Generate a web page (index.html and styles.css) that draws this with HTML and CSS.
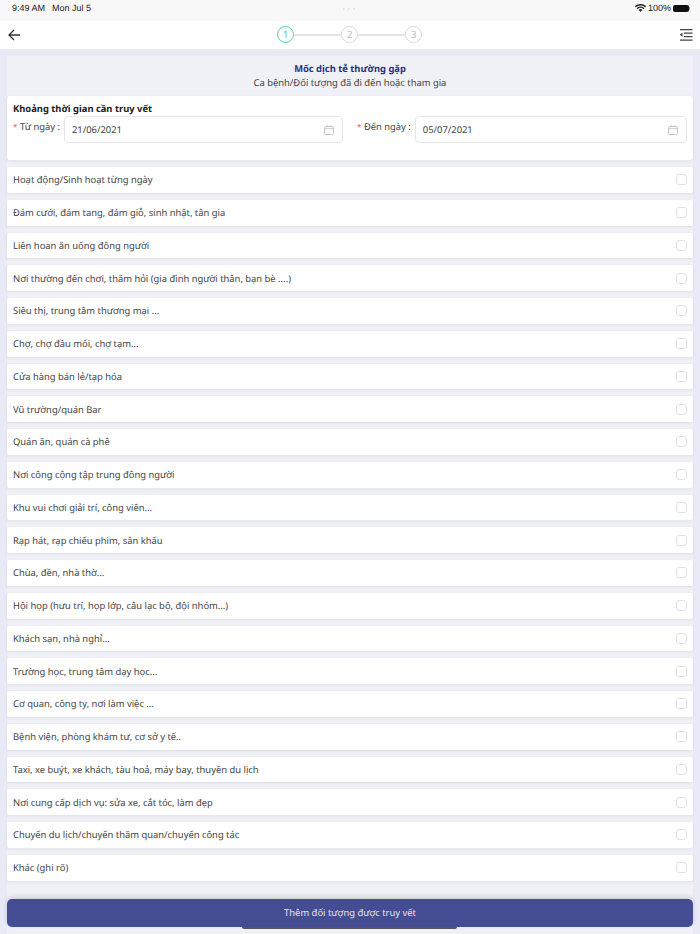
FILE: index.html
```html
<!DOCTYPE html>
<html lang="en">
<head>
  <meta charset="UTF-8" />
  <title>Mốc dịch tễ thường gặp</title>
  <link rel="stylesheet" href="styles.css">
</head>
<body>

  <!-- STATUS BAR -->
  <div class="status-bar">
    <span class="status-time">9:49 AM</span>
    <span class="status-date">Mon Jul 5</span>
    <span class="status-dots"><i></i><i></i><i></i></span>
    <span class="status-right">
      <svg class="wifi" width="11" height="8" viewBox="0 0 11 8">
        <path d="M5.5 8 3.6 5.8a3 3 0 0 1 3.8 0z" fill="#222"/>
        <path d="M.3 2.700a8 8 0 0 1 10.400 0" fill="none" stroke="#222" stroke-width="1.400"/>
        <path d="M2 4.600a5.400 5.400 0 0 1 7 0" fill="none" stroke="#222" stroke-width="1.400"/>
      </svg>
      <span>100%</span>
      <span class="battery"></span>
    </span>
  </div>

  <!-- NAV WITH STEPS -->
  <div class="nav">
    <svg class="nav-back" width="14" height="14" viewBox="0 0 14 14">
      <path d="M13 7H2M7 2 2 7l5 5" fill="none" stroke="#333" stroke-width="1.300"/>
    </svg>
    <div class="steps">
      <span class="step step-active">1</span>
      <span class="step-line"></span>
      <span class="step">2</span>
      <span class="step-line"></span>
      <span class="step">3</span>
    </div>
    <svg class="nav-menu" width="14" height="12" viewBox="0 0 14 12">
      <path d="M1 .7h12.500M5 4.200h8.500M5 7.700h8.500M1 11.200h12.500" fill="none" stroke="#444" stroke-width="1.200"/>
      <path d="M3.500 3.700v4L.7 5.700z" fill="#444"/>
    </svg>
  </div>

  <div class="panel">
    <div class="heading">
      <div class="heading-title">Mốc dịch tễ thường gặp</div>
      <div class="heading-sub">Ca bệnh/Đối tượng đã đi đến hoặc tham gia</div>
    </div>

    <!-- DATE RANGE -->
    <div class="date-card">
      <div class="date-title">Khoảng thời gian cần truy vết</div>
      <div class="date-row">
        <div class="date-field">
          <span class="date-label"><span class="req">*</span>Từ ngày :</span>
          <div class="date-input">
            <span>21/06/2021</span>
            <svg class="cal" width="10" height="10" viewBox="0 0 10 10">
              <path d="M1.500 1.500h7a1 1 0 0 1 1 1v6a1 1 0 0 1-1 1h-7a1 1 0 0 1-1-1v-6a1 1 0 0 1 1-1zM.5 3.700h9M3 .3v2M7 .3v2" fill="none" stroke="#bbb" stroke-width=".8"/>
            </svg>
          </div>
        </div>
        <div class="date-field">
          <span class="date-label"><span class="req">*</span>Đến ngày :</span>
          <div class="date-input">
            <span>05/07/2021</span>
            <svg class="cal" width="10" height="10" viewBox="0 0 10 10">
              <path d="M1.500 1.500h7a1 1 0 0 1 1 1v6a1 1 0 0 1-1 1h-7a1 1 0 0 1-1-1v-6a1 1 0 0 1 1-1zM.5 3.700h9M3 .3v2M7 .3v2" fill="none" stroke="#bbb" stroke-width=".8"/>
            </svg>
          </div>
        </div>
      </div>
    </div>

    <!-- CHECK LIST -->
    <div class="list">
      <div class="row"><span>Hoạt động/Sinh hoạt từng ngày</span><i class="check"></i></div>
      <div class="row"><span>Đám cưới, đám tang, đám giỗ, sinh nhật, tân gia</span><i class="check"></i></div>
      <div class="row"><span>Liên hoan ăn uống đông người</span><i class="check"></i></div>
      <div class="row"><span>Nơi thường đến chơi, thăm hỏi (gia đình người thân, bạn bè ....)</span><i class="check"></i></div>
      <div class="row"><span>Siêu thị, trung tâm thương mại ...</span><i class="check"></i></div>
      <div class="row"><span>Chợ, chợ đầu mối, chợ tạm...</span><i class="check"></i></div>
      <div class="row"><span>Cửa hàng bán lẻ/tạp hóa</span><i class="check"></i></div>
      <div class="row"><span>Vũ trường/quán Bar</span><i class="check"></i></div>
      <div class="row"><span>Quán ăn, quán cà phê</span><i class="check"></i></div>
      <div class="row"><span>Nơi công cộng tập trung đông người</span><i class="check"></i></div>
      <div class="row"><span>Khu vui chơi giải trí, công viên...</span><i class="check"></i></div>
      <div class="row"><span>Rạp hát, rạp chiếu phim, sân khấu</span><i class="check"></i></div>
      <div class="row"><span>Chùa, đền, nhà thờ...</span><i class="check"></i></div>
      <div class="row"><span>Hội họp (hưu trí, họp lớp, câu lạc bộ, đội nhóm...)</span><i class="check"></i></div>
      <div class="row"><span>Khách sạn, nhà nghỉ...</span><i class="check"></i></div>
      <div class="row"><span>Trường học, trung tâm dạy học...</span><i class="check"></i></div>
      <div class="row"><span>Cơ quan, công ty, nơi làm việc ...</span><i class="check"></i></div>
      <div class="row"><span>Bệnh viện, phòng khám tư, cơ sở y tế..</span><i class="check"></i></div>
      <div class="row"><span>Taxi, xe buýt, xe khách, tàu hoả, máy bay, thuyền du lịch</span><i class="check"></i></div>
      <div class="row"><span>Nơi cung cấp dịch vụ: sửa xe, cắt tóc, làm đẹp</span><i class="check"></i></div>
      <div class="row"><span>Chuyến du lịch/chuyến thăm quan/chuyến công tác</span><i class="check"></i></div>
      <div class="row"><span>Khác (ghi rõ)</span><i class="check"></i></div>
    </div>
  </div>

  <!-- BOTTOM BUTTON -->
  <div class="footer-btn">Thêm đối tượng được truy vết</div>
  <div class="home-bar"></div>

</body>
</html>
```

FILE: styles.css
```css
/* ------------------------------
   GENERAL STYLES
-------------------------------*/
html, body {
  height: 100%;
}
body {
  margin: 0;
  padding: 0;
  position: relative;
  overflow: hidden;
  font-family: "Noto Sans", "Open Sans", sans-serif;
  font-size: 9.4px;
  text-rendering: geometricPrecision;
  color: #444;
  background: #e8eaf6;
}

/* ---------------
   STATUS BAR
   ---------------*/
.status-bar {
  height: 21px;
  display: flex;
  align-items: center;
  padding: 0 11px 5px 12px;
  box-sizing: border-box;
  background: #f8f8f8;
  color: #222;
  font-family: "Liberation Sans", sans-serif;
  font-size: 9px;
  position: relative;
}
.status-date {
  margin-left: 7px;
}
.status-dots {
  position: absolute;
  left: 343px;
  top: 8px;
  display: flex;
  gap: 3px;
}
.status-dots i {
  width: 2px;
  height: 2px;
  border-radius: 50%;
  background: #e4e4e4;
}
.status-right {
  margin-left: auto;
  display: flex;
  align-items: center;
  gap: 2px;
}
.battery {
  width: 16px;
  height: 7px;
  background: #111;
  border-radius: 2px;
  position: relative;
}
.battery::after {
  content: "";
  position: absolute;
  left: 16px;
  top: 2px;
  width: 1px;
  height: 3px;
  background: #999;
}

/* ---------------
   NAV
   ---------------*/
.nav {
  height: 28px;
  background: #fff;
  display: flex;
  align-items: center;
  justify-content: space-between;
  padding: 0 7px 0 7px;
  position: relative;
}
.steps {
  position: absolute;
  left: 277px;
  top: 5px;
  display: flex;
  align-items: center;
}
.step {
  width: 17px;
  height: 17px;
  box-sizing: border-box;
  border: 1px solid #d9d9d9;
  border-radius: 50%;
  color: #bbb;
  font-size: 10px;
  line-height: 15px;
  text-align: center;
}
.step-active {
  border-color: #5ed0a0;
  color: #5ed0a0;
}
.step-line {
  width: 47px;
  height: 2px;
  background: #e6e6e6;
}

/* ---------------
   PANEL
   ---------------*/
.panel {
  margin: 7px 7px 0;
  background: #f0f1f6;
  height: 900px;
}
.heading {
  height: 40px;
  padding-top: 6px;
  box-sizing: border-box;
  text-align: center;
}
.heading-title {
  color: #28307f;
  font-weight: 700;
  line-height: 13px;
}
.heading-sub {
  line-height: 16px;
}
.date-card {
  height: 64px;
  box-sizing: border-box;
  padding: 6px 6px 0;
  background: #fff;
  border-radius: 3px;
  box-shadow: 0 1px 3px rgba(90, 95, 140, 0.12);
}
.date-title {
  color: #222;
  font-weight: 700;
  line-height: 13px;
}
.date-row {
  display: flex;
  gap: 14px;
  margin-top: 1px;
}
.date-field {
  flex: 1;
  display: flex;
  align-items: flex-start;
}
.date-label {
  white-space: nowrap;
  line-height: 16px;
  margin: 3px 4px 0 0;
}
.req {
  color: #f5565a;
  font-size: 8px;
  margin-right: 2.5px;
}
.date-input {
  flex: 1;
  height: 27px;
  box-sizing: border-box;
  border: 1px solid #e6e6e6;
  border-radius: 4px;
  display: flex;
  align-items: center;
  justify-content: space-between;
  padding: 0 8px 0 7px;
}

/* ---------------
   CHECK LIST
   ---------------*/
.list {
  margin-top: 7px;
  display: flex;
  flex-direction: column;
  gap: 7px;
}
.row {
  height: 25.76px;
  box-sizing: border-box;
  padding: 0 6px;
  background: #fff;
  border-radius: 2px;
  display: flex;
  align-items: center;
  justify-content: space-between;
  box-shadow: 0 1px 3px rgba(90, 95, 140, 0.12);
}
.check {
  width: 11px;
  height: 11px;
  box-sizing: border-box;
  border: 1px solid #e2e2e2;
  border-radius: 3px;
}

/* ---------------
   BOTTOM BUTTON
   ---------------*/
.footer-btn {
  position: absolute;
  left: 7px;
  right: 7px;
  top: 899px;
  height: 28px;
  border-radius: 5px;
  background: #444c94;
  color: #e4e5f2;
  line-height: 27px;
  text-align: center;
  box-shadow: 0 -2px 5px rgba(60, 60, 80, 0.2);
}
.home-bar {
  position: absolute;
  left: 242px;
  top: 927px;
  width: 215px;
  height: 2px;
  background: #555;
  border-radius: 0 0 2px 2px;
}
```
